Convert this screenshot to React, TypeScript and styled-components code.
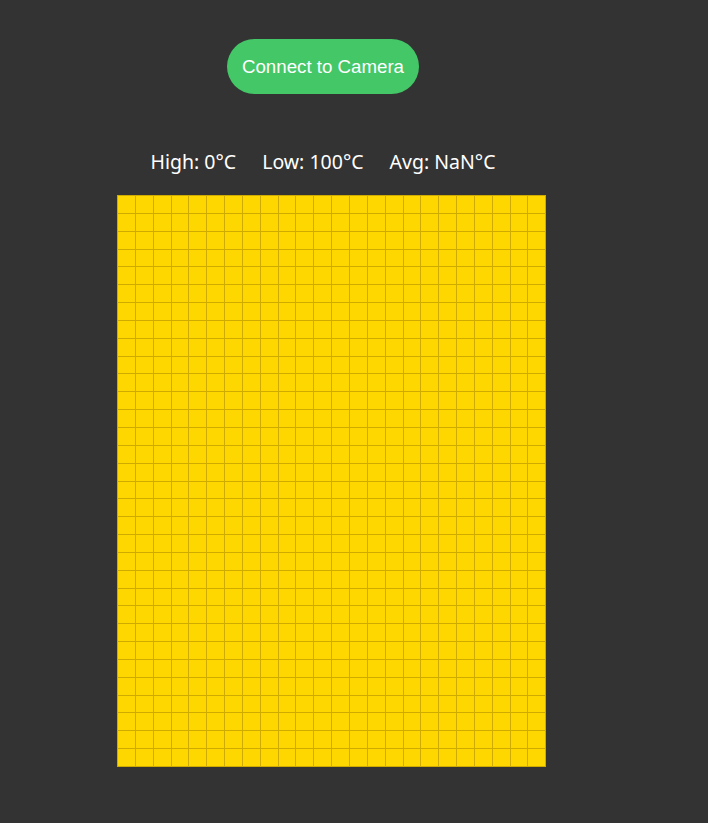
import styled, { createGlobalStyle } from "styled-components";
import { FC } from "react";

const COLS = 24;
const ROWS = 32;

const GlobalStyle = createGlobalStyle`
  html, body {
    margin: 0;
    padding: 0;
    background: #333333;
    min-height: 100%;
  }
  body {
    min-height: 823px;
  }
`;

const Page = styled.div`
  display: flex;
  flex-direction: column;
  align-items: flex-start;
  padding: 39px 0 0 108px;
`;

const Column = styled.div`
  width: 430px;
  display: flex;
  flex-direction: column;
  align-items: center;
`;

const ConnectButton = styled.button`
  height: 55px;
  padding: 0;
  width: 192px;
  border: none;
  border-radius: 28px;
  background: #44c767;
  color: #ffffff;
  font-family: "Liberation Sans", Arial, sans-serif;
  font-size: 18.7px;
  white-space: nowrap;
  cursor: pointer;
`;

const Stats = styled.div`
  display: flex;
  gap: 26px;
  margin-top: 54px;
  color: #ffffff;
  font-family: "Noto Sans", "Open Sans", sans-serif;
  font-size: 19.5px;
  line-height: 28px;
`;

const Grid = styled.div`
  align-self: flex-start;
  margin: 19px 0 0 9px;
  width: 429px;
  display: grid;
  grid-template-columns: repeat(${COLS}, 1fr);
  gap: 1px;
  padding: 1px;
  box-sizing: border-box;
  background: #cfab00;
`;

interface CellProps {
  color: string;
}
const Cell = styled.div<CellProps>`
  aspect-ratio: 1;
  background: ${({ color }) => color};
`;

const App: FC = () => {
  const cells = Array.from({ length: COLS * ROWS }, (_, i) => i);
  return (
    <>
      <GlobalStyle />
      <Page>
        <Column>
          <ConnectButton>Connect to Camera</ConnectButton>
          <Stats>
            <span>High: 0°C</span>
            <span>Low: 100°C</span>
            <span>Avg: NaN°C</span>
          </Stats>
          <Grid>
            {cells.map((i) => (
              <Cell key={i} color="#ffd700" />
            ))}
          </Grid>
        </Column>
      </Page>
    </>
  );
};

export default App;
